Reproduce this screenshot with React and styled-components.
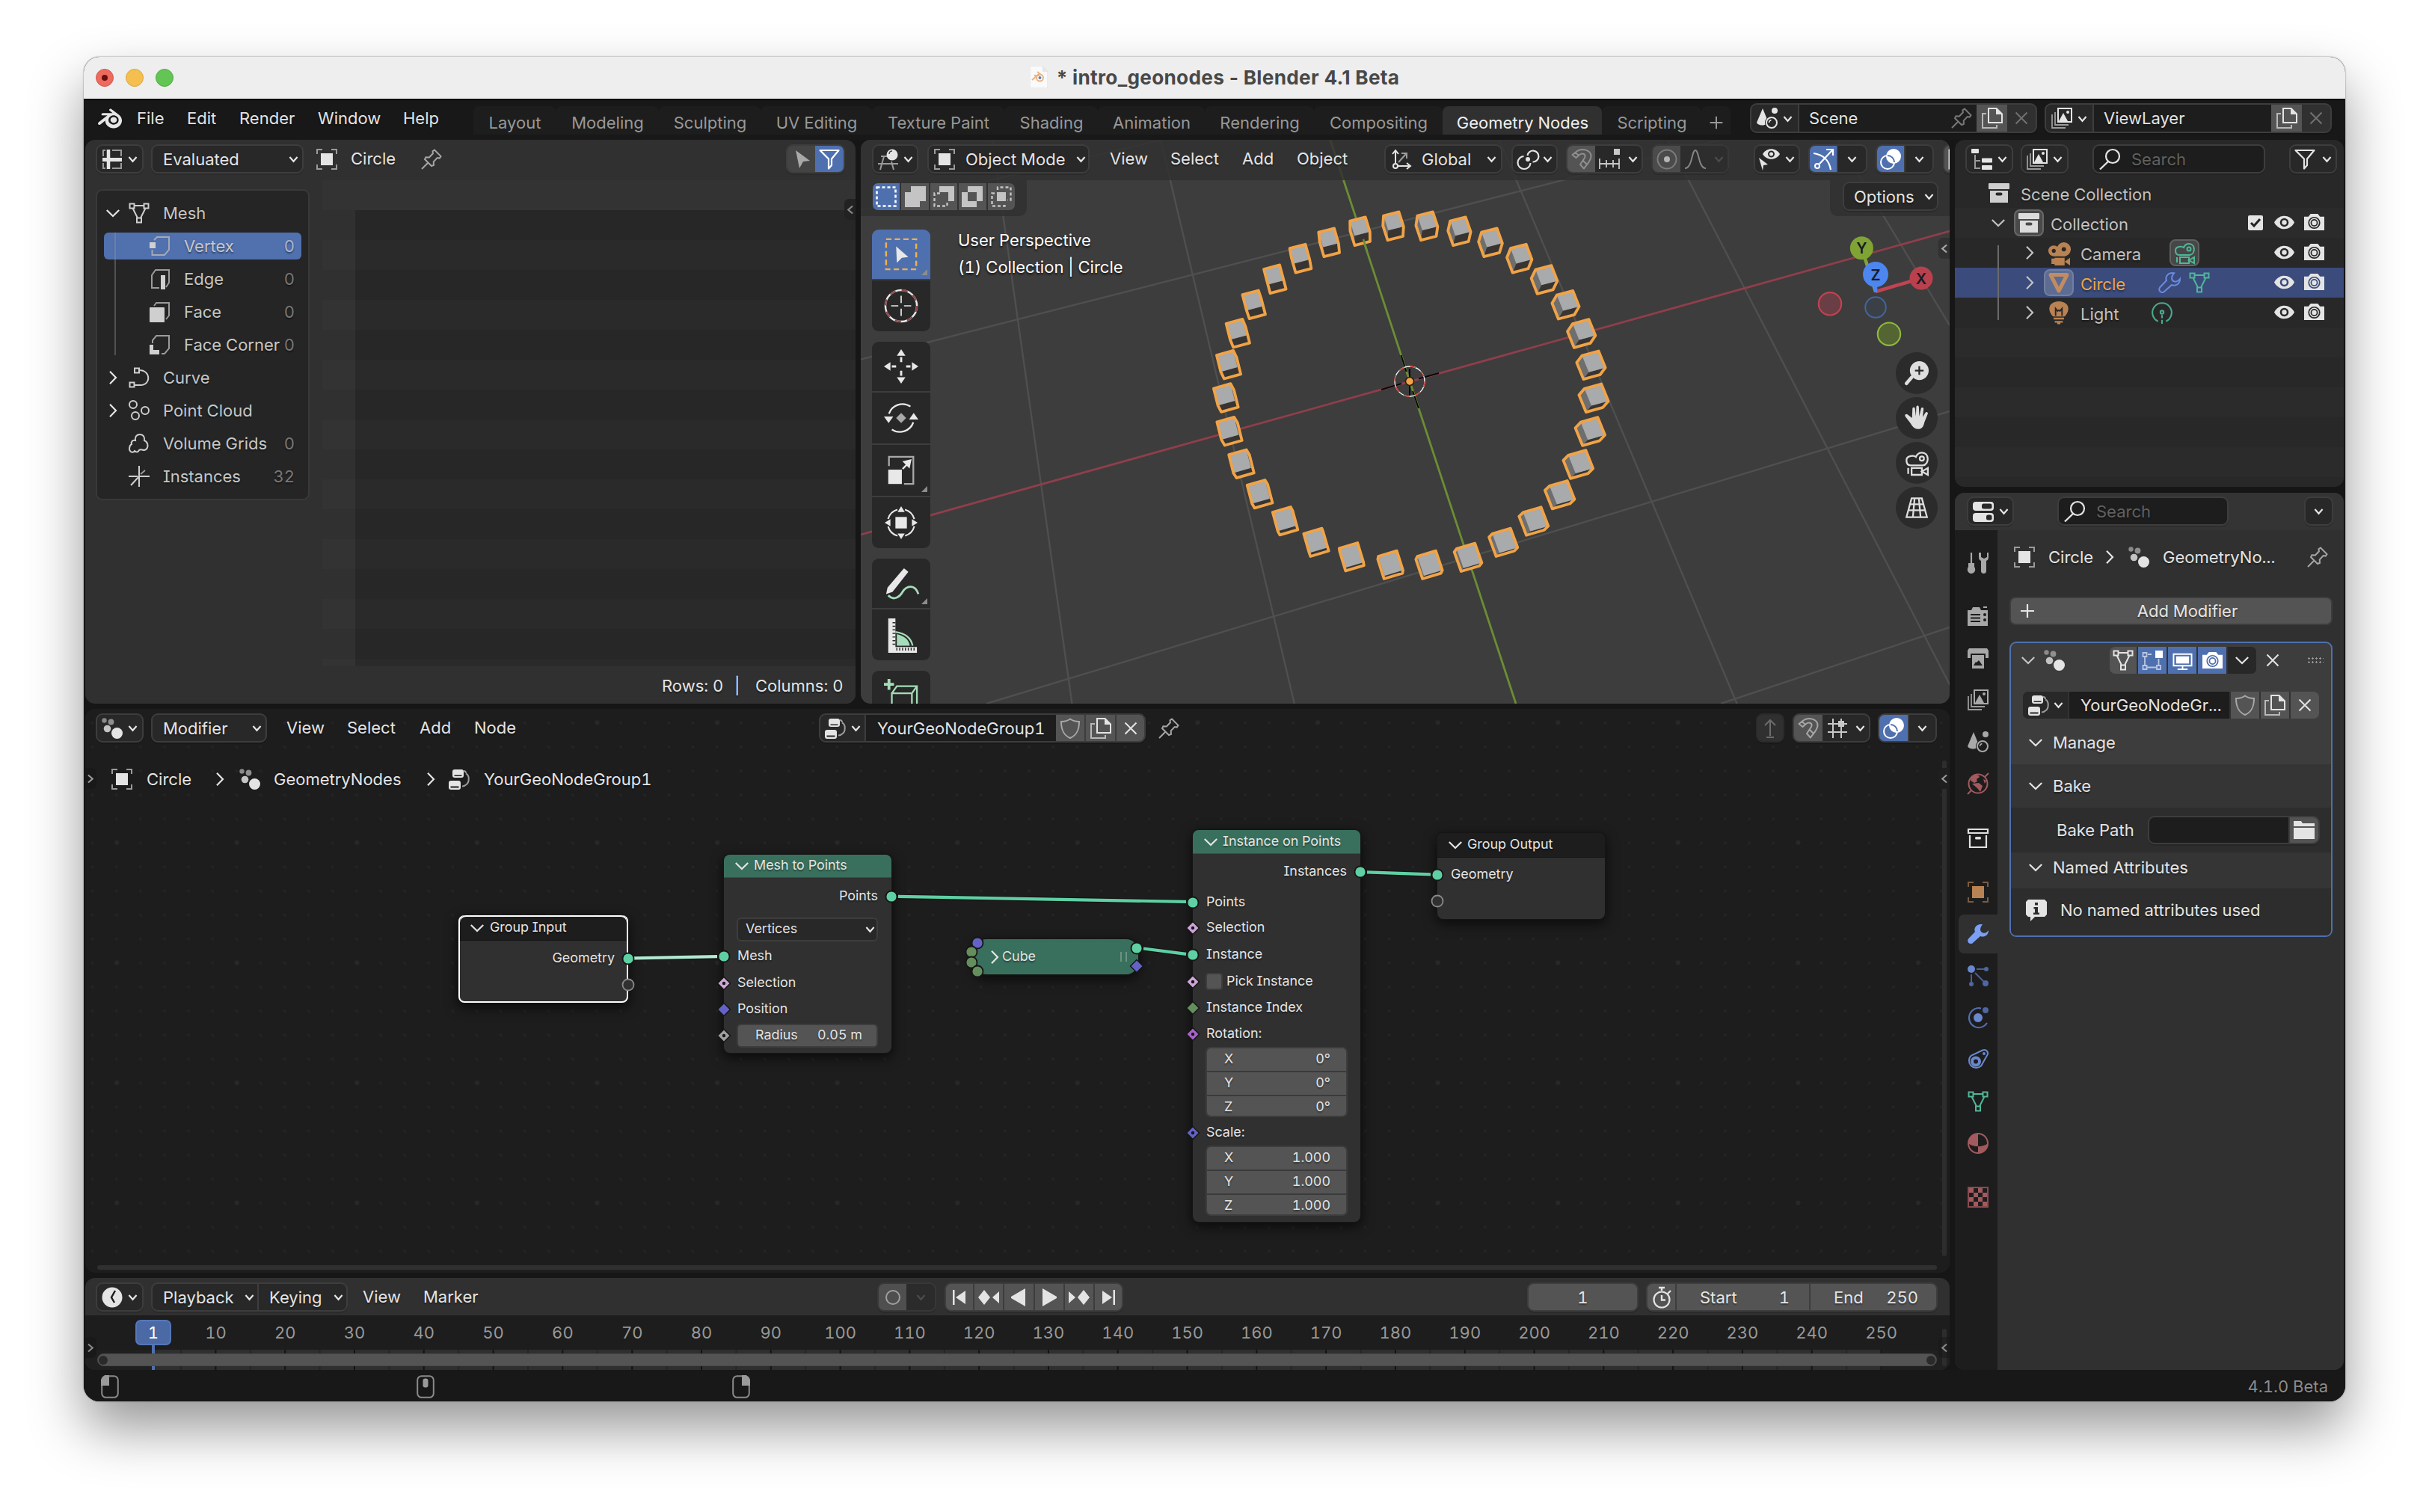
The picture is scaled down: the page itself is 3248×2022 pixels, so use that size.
import React from "react";
import styled, { createGlobalStyle, css } from "styled-components";
import { SiBlender } from "react-icons/si";

const C = {
  text: "#e4e4e4",
  blue: "#4f70af",
  btn: "#545454",
  dark: "#282828",
  field: "#1d1d1d",
  line: "#3d3d3d",
  panel: "#303030",
  teal: "#5fd0a4",
  orange: "#f0a347",
};

const Global = createGlobalStyle`
  html, body { margin: 0; padding: 0; background: #fff; }
  * { box-sizing: border-box; }
  body { font-family: Inter, "Liberation Sans", sans-serif; font-size: 22px; color: ${C.text}; font-feature-settings: "cv08", "tnum", "calt" 0; }
  svg { display: block; }
`;

/* ---------- icons, drawn on a 28 x 28 board ---------- */
const G = "#9b9b9b";
const L = (d, c, w = 2, extra = {}) => (
  <path d={d} fill="none" stroke={c} strokeWidth={w} {...extra} />
);
const ICONS = {
  sheet: (c) => (<>{L("M14 2h12v8M26 19v7H14M5 26H2v-7M2 10V2h3", G)}{L("M9 1v26", c, 4.5)}{L("M1 14.5h26", c, 5)}</>),
  object: (c, bg, g) => (<>{L("M1 7V1h7M20 1h7v6M27 21v6h-7M8 27H1v-6", g || G)}<rect x="6" y="6" width="16" height="16" fill={c} /></>),
  pin: (c) => L("M18 1.5l8.5 8.5-1.8 2.6-3-.5-5 5.2.3 4.5-3 1.2-9-9 1.4-2.8 4.5.3 5-5.2-.4-3zM9.5 18.5L1 27", c),
  arrow: (c) => <path d="M6 2l19 14-9 1-5 9z" fill={c} />,
  filter: (c) => L("M1.5 2h25L17 13.5V22l-4 4.5v-13z", c, 2.2, { strokeLinejoin: "round" }),
  mesh: (c) => (<>{L("M1.5 1.5h6v6h-6zM20.500 1.500h6v6h-6zM11 20.500h6v6h-6zM7.500 4h13M5.500 7.500L12 20.500M22.500 7.500L16 20.500", c)}</>),
  vertex: (c) => (<>{L("M6 6l4-4h16v17l-6 7H3.500v-7", "#a4a9b4")}<rect x="0" y="9" width="8" height="8" fill={c} /></>),
  edge: (c) => (<>{L("M13 26H3V9l5-7h18v17l-4 6", G)}<rect x="15" y="9" width="6" height="19" fill={c} /></>),
  face: (c) => (<>{L("M6 6l3-4h17v17l-4 5", G)}<rect x="0" y="8" width="20" height="20" rx="1" fill={c} /></>),
  corner: (c) => (<>{L("M4 12V8l5-6h17v17l-6 7h-4", G)}<path d="M0 14h5v7h8v6H0z" fill={c} /></>),
  curve: (c) => L("M8 1.500h6v6H8zM1.500 20.500h6v6h-6zM14 4c16 0 16 20 2 20H7.500", c),
  points: (c) => (<g fill="none" stroke={c} strokeWidth="2"><circle cx="6" cy="6" r="5" /><circle cx="22" cy="14" r="5" /><circle cx="9" cy="21" r="5" /></g>),
  volume: (c) => L("M9 10c-1-5 2-8 6-8s7 3 6 8c6 3 6 11 0 13-3 0-5-2-7 0-2 4-5 2-6 1-2 3-6 2-7-2 0-4 1-6 3-7-1-3 1-6 5-5z", c),
  axes: (c) => (<>{L("M14 0v28", c)}{L("M12 14H0M28 14H14L3 26", c)}{L("M16 11l6-5", G)}</>),
  view3d: (c) => (<>{L("M5 10H15M1 20h27M9 10L4 28M19 17l3 11M6 10h0", G)}<circle cx="20" cy="8" r="7.500" fill={c} />{L("M16 7c0-3 2-4 4-4", "#444", 1.5)}</>),
  selNew: (c) => L("M1.500 1.500h25v25h-25z", c, 2.600, { strokeDasharray: "4 3" }),
  selAdd: (c) => <path d="M8 0h20v20h-8v8H0V8h8z" fill={c} />,
  selSub: (c) => (<><path d="M8 0h20v20h-8V8H8z" fill={c} />{L("M9 9.500H1.500v17h17V20", c, 2.400, { strokeDasharray: "4 3" })}</>),
  selInv: (c) => (<path fillRule="evenodd" d="M8 0h20v20h-8v8H0V8h8zM8 8h12v12H8z" fill={c} />),
  selInt: (c) => (<><rect x="8" y="8" width="12" height="12" fill={c} />{L("M9 5V1.500h17.500v17H22M5 9.500H1.500v17h17V22", c, 2.400, { strokeDasharray: "4 3" })}</>),
  orient: (c) => (<>{L("M6 19V3M2 7l4-5 4 5M9 23h16M21 19l5 4-5 4", c)}<circle cx="6" cy="23" r="3" fill="none" stroke={c} strokeWidth="2" />{L("M10 18L20 7M14 6h7v7", G)}</>),
  pivot: (c) => (<><circle cx="15" cy="14" r="3" fill={c} />{L("M14.500 9a7.500 7.500 0 1 1 7 8.500", c, 2.200)}{L("M9.500 10a8.500 8.500 0 1 0 9 9", c, 2.200)}</>),
  magnet: (c) => L("M1.500 8L8 3C14-1 26.500 1 26.500 10c0 6-6 11-9.500 16.500L12 21l6-9c2.500-5-3-7-7-4l-4.500 4zM5.500 5l5 4.200M21 21l-5-5", c, 2, { strokeLinejoin: "round" }),
  snapInc: (c) => (<><rect x="20" y="0" width="8" height="8" fill={c} />{L("M1 13v14M27 13v14M10 15v10M19 15v10M1 20h26", c, 1.800)}</>),
  grid: (c) => (<>{L("M8 1v26M19 1v26M1 8h26M1 19h26", c, 2)}<rect x="15" y="4" width="8" height="8" fill={c} /></>),
  prop: (c) => (<><circle cx="14" cy="14" r="12.500" fill="none" stroke="#7c7c7c" strokeWidth="2" /><circle cx="14" cy="14" r="4" fill={c} /></>),
  falloff: (c) => L("M0 26C10 26 9 2 14 2s4 24 14 24", c),
  vis: (c) => (<><path d="M5 7c5-9 18-9 23 0-5 9-18 9-23 0z" fill={c} /><circle cx="16.500" cy="7" r="3.500" fill={c} stroke="#282828" strokeWidth="2" /><path d="M0 12l12 9-6 1-1 7z" fill={c} /></>),
  gizmo: (c) => (<>{L("M1 6C14 8 22 16 24 28M9 20L26 2M18 1h9v8", c, 2.200)}<circle cx="6" cy="23" r="3" fill="none" stroke={c} strokeWidth="2" /></>),
  overlay: (c) => (<><circle cx="18" cy="10" r="10" fill={c} /><circle cx="10" cy="18" r="9" fill="none" stroke={c} strokeWidth="2" />{L("M10 9a9 9 0 0 1 9 9", C.blue, 2)}</>),
  shadeSolid: (c) => L("M26 2H3v24h23", c, 3),
  scene: (c, bg) => (<><path d="M8 1l7 17c-1 7-13 7-15 2z" fill={c} /><circle cx="24" cy="4" r="4" fill={c} /><circle cx="20" cy="20" r="9" fill={bg} /><circle cx="20" cy="20" r="7" fill="none" stroke={c} strokeWidth="2" />{L("M16.500 20c0-2 1-3 3-3.500", c, 1.500)}</>),
  layers: (c) => (<>{L("M1 9v18h18M5 6v17h18", G, 1.800)}<path fillRule="evenodd" d="M8 0h20v20H8zM10 2v16h16V2z" fill={c} /><path d="M10 18l6-11 6 11z" fill={c} /><circle cx="22" cy="6" r="2" fill={c} /></>),
  dup: (c) => (<>{L("M6 8H1v19h19v-4", "#b8b8b8")}<path fillRule="evenodd" d="M8 0h12l8 8v13H8zM10 2v17h16V9h-7V2z" fill={c} /></>),
  x: (c) => L("M6.500 6.500l15 15M21.500 6.500l-15 15", c, 2),
  plus: (c) => L("M14 5v18M5 14h18", c, 2.200),
  outliner: (c) => (<>{L("M5 8v18h7M5 16h7", G)}<rect x="0" y="0" width="10" height="6" rx="1" fill={c} /><rect x="14" y="12.500" width="14" height="6" rx="1" fill={c} /><rect x="14" y="22" width="14" height="6" rx="1" fill={c} /></>),
  search: (c) => (<><circle cx="18" cy="10" r="9" fill="none" stroke={c} strokeWidth="2.200" />{L("M12 17L1 27.500", c, 2.400)}</>),
  box: (c, bg) => (<><rect x="0" y="1" width="28" height="8" rx="1" fill={c} /><path d="M2 11h24v16H2z" fill={c} /><rect x="9.500" y="13.500" width="9" height="4" rx="2" fill={bg} /></>),
  boxOut: (c) => (<>{L("M1 2h26v5H1zM3 10v16h22V10", c, 2.200)}<rect x="10" y="12" width="8" height="3.500" rx="1.500" fill={c} /></>),
  cine: (c, bg) => (<><circle cx="7" cy="11" r="7" fill={c} /><circle cx="20" cy="9" r="9" fill={c} /><path d="M8 9h14v9H7z" fill={c} /><circle cx="7" cy="11" r="2.500" fill={bg} /><circle cx="20" cy="9" r="2.800" fill={bg} /><path d="M8 20h13v10H8zM21 25l7-5v10zM4 21v7h4v-7z" fill={c} /></>),
  cineOut: (c) => (<>{L("M7 17h14c8-1 8-15-1-15-5 0-6 3-7 5-2-2-11-2-11 4 0 4 2 6 5 6zM8 20h12v8H8zM20 24l7-4v8zM4 20v7", c, 2)}<circle cx="20" cy="9" r="2.500" fill="none" stroke={c} strokeWidth="2" /></>),
  tri: (c) => L("M3 3.500h22L14 25z", c, 5, { strokeLinejoin: "round" }),
  wrench: (c, bg, g) => (<path d="M18 1c-7 0-10 6-8 10L1 20.500c-2 3 0 7 4 6.500 1 0 2-1 2.500-1.500L17 17c5 2 11-1 11-8-3 4-5 4-7.500 3.500C16 11 16 6 20 1.300z" fill={g ? "none" : c} stroke={g || c} strokeWidth={g ? 2 : 0} />),
  bulb: (c, bg) => (<><path d="M14 0c16 1 13 14 7 19H7C1 14-2 1 14 0z" fill={c} />{L("M10 18V9l2.500 3 1.500-1 1.500 1L18 9v9", bg, 1.800)}{L("M7.500 21.500h13M9 25.500h10", c, 2.200)}<rect x="12" y="26" width="4" height="2.500" fill={c} /></>),
  lightData: (c) => (<>{L("M9 25A12 12 0 1 1 19 25", c, 2)}<circle cx="14" cy="13.500" r="2" fill="none" stroke={c} strokeWidth="2" />{L("M14 17v4M14 23v5", c, 2)}</>),
  eye: (c, bg) => (<><path d="M0 14c6-12 22-12 28 0-6 12-22 12-28 0z" fill={c} /><circle cx="14" cy="14" r="6" fill={bg} /><circle cx="14" cy="14" r="3.300" fill={c} /></>),
  camera: (c, bg) => (<><path d="M0 6h6l3-4h10l3 4h6v19H0z" fill={c} /><circle cx="14" cy="14.500" r="7.500" fill="none" stroke={bg} strokeWidth="1.800" /><circle cx="14" cy="14.500" r="4.200" fill="none" stroke={bg} strokeWidth="1.800" /></>),
  props: (c, bg) => (<><rect x="0" y="1" width="28" height="12" rx="4" fill={c} /><rect x="12" y="3.500" width="13.500" height="7" rx="2.500" fill={bg} /><rect x="0" y="16" width="28" height="12" rx="4" fill={c} /><rect x="18" y="18.500" width="7.500" height="7" rx="2.500" fill={bg} /></>),
  geo: (c) => (<><circle cx="3.500" cy="3.500" r="3.200" fill="#8a8a8a" /><circle cx="12.500" cy="5.500" r="3.900" fill="#8f8f8f" /><circle cx="7.500" cy="14.500" r="4.800" fill="#c4c4c4" /><circle cx="20.500" cy="20.500" r="7.500" fill={c} /></>),
  group: (c, bg) => (<>{L("M20 3c3 0 3 2 3 3M23 6.500c5 2 5 12 0 15-1 1-2 2-5 2", G, 2)}<rect x="5" y="1" width="15" height="11" rx="3" fill={c} /><rect x="0" y="16" width="16" height="12" rx="3" fill={c} /><rect x="2.500" y="23.500" width="11" height="2" fill={bg} /><rect x="7.500" y="8.500" width="10" height="1.500" fill={bg} /></>),
  shield: (c) => L("M14 1.500c4 3 8 3.500 12 3.500 0 11-3 18-12 22C5 23 2 16 2 5c4 0 8-.5 12-3.500z", c, 2),
  tool: (c) => (<>{L("M5 0v15", c, 2.200)}<path d="M1 14h8v5c3 4 0 9-4 9s-7-5-4-9z" fill={c} /><path d="M15 0v5c0 4 1 5 3 6v14c0 4 7 4 7 0V11c2-1 3-2 3-6V0h-2v6l-4 2-4-2V0z" fill={c} /></>),
  render: (c, bg) => (<><path d="M0 6h5l2-4h9l2 4h9v21H0z" fill={c} />{L("M4 12h13M4 16.500h13M4 21h13", bg, 2)}<circle cx="23" cy="12" r="2" fill={bg} /><circle cx="23" cy="19" r="2" fill={bg} /><rect x="21" y="1" width="5" height="2" fill={c} /></>),
  output: (c, bg) => (<><path d="M2 1h24l2 3v10h-4V8H4v6H0V4z" fill={c} /><path fillRule="evenodd" d="M6 10h16v18H6zM8 24h12l-5-7-3 3-1-1z" fill={c} /></>),
  world: (c) => (<><circle cx="14" cy="14" r="12.500" fill="none" stroke={c} strokeWidth="2" /><path d="M5 5c6-4 9-3 11 0l-4 3 1 3-4 2-5-3zM6 14l9-1 5 4-3 8-4-5zM21 8l4 2-2 4z" fill={c} />{L("M28 0l-5 5M0 28l5-5", c, 2)}</>),
  particles: (c) => (<>{L("M12 5h13M5 12v13M10 10l14 14", "#4a5f96", 2)}<circle cx="5" cy="5" r="5" fill={c} /><circle cx="25" cy="5" r="3" fill="#4f66a2" /><circle cx="5" cy="25" r="3" fill="#4f66a2" /><circle cx="24" cy="24" r="4" fill="#4f66a2" /></>),
  physics: (c) => (<>{L("M18 1.500A13 13 0 1 0 26 21", "#5670ad", 2)}<circle cx="14" cy="14" r="6" fill={c} /><circle cx="24" cy="4" r="4" fill="#4f66a2" /></>),
  constraint: (c) => (<>{L("M20 1.500c5-2 9 3 6 7l-8 14A9.500 9.500 0 1 1 5 8.500z", c, 2)}<circle cx="11" cy="16.500" r="5" fill="none" stroke={c} strokeWidth="4" /><circle cx="22" cy="6" r="2" fill={c} /></>),
  material: (c) => (<><circle cx="14" cy="14" r="13" fill="none" stroke={c} strokeWidth="2" /><path d="M14 1v17c-6 0-11-2-13-4C1 6 7 1 14 1zM14 18c6 0 11-2 13-4 0 8-6 13-13 13z" fill={c} /></>),
  texture: (c) => (<><rect x="1" y="1" width="26" height="26" fill="none" stroke="#8a4a50" strokeWidth="2" /><path d="M2 2h6v6H2zM14 2h6v6h-6zM8 8h6v6H8zM20 8h6v6h-6zM2 14h6v6H2zM14 14h6v6h-6zM8 20h6v6H8zM20 20h6v6h-6z" fill={c} /></>),
  info: (c, bg) => (<><path d="M3 0h22l3 3v17l-3 3H12l-6 6v-6H3l-3-3V3z" fill={c} /><path d="M12 4h4v3.500h-4zM10.500 10H16v7.500h2V20h-8v-2.500h2V12.500h-1.500z" fill={bg} /></>),
  folder: (c) => <path d="M0 2h10l2 3h16v4H0zM0 11h28v15H0z" fill={c} />,
  editmode: () => (<>{L("M1.500 4h5v5h-5zM1.500 21h5v5h-5zM20 21h5v5h-5zM4 9v12M7 23.500h13M8 6h5M22.500 12v9", "#b9c6e2", 1.800)}<rect x="18" y="1" width="10" height="10" fill="#fff" /></>),
  screen: (c) => (<>{L("M1.500 5h25v16h-25z", c, 2)}<rect x="5" y="8" width="18" height="10" fill={c} />{L("M14 21v4M7 26h14", c, 2)}</>),
  clock: (c) => (<><circle cx="14" cy="14" r="13.500" fill={c} />{L("M18 5l-5 9 4 7", "#1a1a1a", 2.400)}</>),
  watch: (c) => (<><circle cx="14" cy="17" r="10.500" fill="none" stroke={c} strokeWidth="2.200" />{L("M14 5V1M10 1h8M22 9l4-4M14 11v6.500h5", c, 2.400)}</>),
  record: (c) => <circle cx="14" cy="14" r="9" fill="none" stroke={c} strokeWidth="2" />,
  first: (c) => (<><rect x="5" y="4" width="2.500" height="20" fill={c} /><path d="M22 5v18L9 14z" fill={c} /></>),
  prevKey: (c) => (<path d="M8 4l8 10-8 10-8-10zM28 6v16l-9-8z" fill={c} />),
  play: (c) => <path d="M5 2l19 11v2L5 26z" fill={c} />,
  up: (c) => L("M9 26h10M14 24V4M7 10l7-7 7 7", c, 2),
  zoom: () => (<><circle cx="17" cy="11" r="11" fill="#dedede" />{L("M8 19L2 26", "#dedede", 4, { strokeLinecap: "round" })}{L("M17 6v10M12 11h10", "#2b2b2b", 2)}</>),
  hand: () => <path d="M9 3c0-2 3-2 3 0l1 9 .5-11c0-2 3-2 3 0l.5 11 2-9c.5-2 3-1.500 3 0l-1 10 3-5c1-2 3.500-1 3 1l-4 10c-1 5-3 8-7.500 8-5 0-7-4-9-7l-6-8c-1-2 1-3.500 3-2l5 4z" fill="#dedede" />,
  persp: () => (<>{L("M8 3h12l6 22H2zM11.500 3L9.500 25M16.500 3l2 22M5.500 10h17M4 17h20", "#dedede", 2)}</>),
};

const Icon = ({ n, s = 28, c = C.text, bg = C.dark, g, flip }) => (
  <svg width={s} height={s} viewBox="0 0 28 28" overflow="visible" style={flip ? { transform: "scaleX(-1)" } : undefined}>
    {ICONS[n](c, bg, g)}
  </svg>
);
const ROT = { down: 0, right: -90, left: 90 };
const Chev = ({ d = "down", big, c }) => (
  <svg width={big ? 18 : 13} height={big ? 18 : 13} viewBox="-9 -9 18 18" overflow="visible">
    <path
      d={big ? "M-8.200-4L0 4 8.200-4" : "M-7-3.500L0 4.500 7-3.500"}
      transform={`rotate(${ROT[d]})`}
      fill="none"
      stroke={c || C.text}
      strokeWidth={big ? 2.200 : 3}
    />
  </svg>
);

/* ---------- shared primitives ---------- */
const Slot = styled.div`
  flex: none;
  display: flex;
  align-items: center;
  justify-content: ${(p) => p.$j || "flex-start"};
  width: ${(p) => (p.$w ? p.$w + "px" : "auto")};
  height: ${(p) => (p.$h ? p.$h + "px" : "auto")};
  margin-left: ${(p) => p.$ml || 0}px;
`;
const Label = styled.span`
  flex: none;
  white-space: nowrap;
  line-height: 28px;
  width: ${(p) => (p.$w ? p.$w + "px" : "auto")};
  margin-left: ${(p) => p.$ml || 0}px;
  text-align: ${(p) => p.$a || "left"};
  color: ${(p) => p.$c || C.text};
  text-shadow: 0 2px 2px rgba(0, 0, 0, 0.4);
`;
const Push = styled.div`
  flex: 1;
`;
const Widget = styled.div`
  flex: none;
  display: flex;
  align-items: stretch;
  width: ${(p) => p.$w}px;
  height: ${(p) => p.$h || 39}px;
  margin-left: ${(p) => p.$ml || 0}px;
  border: 2px solid ${(p) => p.$line || C.line};
  border-radius: 9px;
  background: ${(p) => p.$bg || C.dark};
  box-shadow: 0 2px 0 rgba(0, 0, 0, 0.12);
  overflow: hidden;
`;
const Seg = styled.div`
  flex: ${(p) => (p.$w ? "none" : 1)};
  display: flex;
  align-items: center;
  justify-content: ${(p) => p.$j || "center"};
  gap: ${(p) => p.$gap || 0}px;
  width: ${(p) => (p.$w ? p.$w + "px" : "auto")};
  padding: 0 ${(p) => p.$pr || 0}px 0 ${(p) => p.$pl || 0}px;
  background: ${(p) => p.$bg || "transparent"};
  ${(p) => p.$sep && css`border-left: 2px solid ${C.line};`}
`;
const MenuButton = ({ icon, w = 64, ml }) => (
  <Widget $w={w} $ml={ml}>
    <Seg $gap={7}>
      <Icon n={icon} />
      <Chev />
    </Seg>
  </Widget>
);
const Area = styled.section`
  flex: none;
  position: relative;
  display: flex;
  flex-direction: column;
  width: ${(p) => p.$w}px;
  height: ${(p) => p.$h}px;
  background: ${(p) => p.$bg};
  border-radius: 13px;
  overflow: hidden;
`;
const Header = styled.header`
  flex: none;
  position: relative;
  z-index: 2;
  display: flex;
  align-items: flex-start;
  height: ${(p) => p.$h || 54}px;
  padding: ${(p) => p.$pt || 6}px 0 0 ${(p) => p.$pl || 14}px;
  background: ${(p) => p.$bg || "transparent"};
  & > span { line-height: 39px; }
`;
const EdgeTab = styled.div`
  position: absolute;
  z-index: 3;
  top: ${(p) => p.$y}px;
  ${(p) => (p.$side === "left" ? "left: 0;" : "right: 0;")}
  width: 15px;
  height: 28px;
  display: flex;
  align-items: center;
  justify-content: ${(p) => (p.$side === "left" ? "flex-start" : "flex-end")};
  background: ${(p) => p.$bg};
  border-radius: ${(p) => (p.$side === "left" ? "0 6px 6px 0" : "6px 0 0 6px")};
`;

/* ---------- window ---------- */
const Page = styled.div`
  width: 3248px;
  height: 2022px;
  padding: 76px 112px;
  background: #fff;
  overflow: hidden;
`;
const Window = styled.div`
  display: flex;
  flex-direction: column;
  width: 3024px;
  height: 1798px;
  border-radius: 21px;
  background: #161616;
  overflow: hidden;
  box-shadow: 0 0 2px rgba(0, 0, 0, 0.55), 0 36px 72px rgba(0, 0, 0, 0.41);
`;
const TitleBar = styled.div`
  flex: none;
  display: grid;
  grid-template-columns: 1fr auto 1fr;
  align-items: center;
  height: 56px;
  padding: 0 16px;
  background: #eeeeee;
`;
const Lights = styled.div`
  display: flex;
  gap: 16px;
`;
const Light = styled.div`
  width: 24px;
  height: 24px;
  border-radius: 50%;
  background: ${(p) => p.$c};
  border: 1px solid ${(p) => p.$b};
  display: grid;
  place-items: center;
  &::after {
    content: "";
    width: 8px;
    height: 8px;
    border-radius: 50%;
    background: ${(p) => p.$dot || "transparent"};
  }
`;
const WinTitle = styled.div`
  display: flex;
  align-items: center;
  gap: 12px;
  padding-bottom: 2px;
  color: #484848;
  font-size: 26.200px;
  font-weight: 700;
  letter-spacing: 0.300px;
  font-feature-settings: normal;
  white-space: nowrap;
`;
const TopBarBox = styled.div`
  flex: none;
  display: flex;
  align-items: flex-start;
  height: 55px;
  border-top: 2px solid #000;
  padding-left: 19px;
  background: #181818;
`;
const Tabs = styled.nav`
  display: flex;
  margin: 8px 0 0 22px;
  height: 38px;
`;
const Tab = styled.div`
  flex: none;
  width: ${(p) => p.$w}px;
  display: flex;
  align-items: center;
  justify-content: center;
  padding: 6px 0 0 1px;
  white-space: nowrap;
  border-radius: 8px 8px 0 0;
  background: ${(p) => (p.$on ? "#303030" : "#1d1d1d")};
  color: ${(p) => (p.$on ? "#efefef" : "#989898")};
`;
const TABS = [["Layout", 110], ["Modeling", 138], ["Sculpting", 136], ["UV Editing", 149], ["Texture Paint", 177], ["Shading", 125], ["Animation", 143], ["Rendering", 146], ["Compositing", 172], ["Geometry Nodes", 213], ["Scripting", 133]];
const IdSlot = styled(Slot)`
  margin-top: 4px;
`;
const IdSelector = ({ icon, name, pin, ml }) => (
  <Widget $w={384} $ml={ml} $h={40} $bg="#303030">
    <Seg $w={62} $gap={7} $bg={C.dark}><Icon n={icon} /><Chev /></Seg>
    <Seg $w={239} $sep $j="space-between" $pl={13} $pr={6} $bg={C.field}>
      <Label>{name}</Label>
      {pin && <Icon n="pin" c="#777" />}
    </Seg>
    <Seg $w={41} $bg={C.btn}><Icon n="dup" /></Seg>
    <Seg><Icon n="x" c="#717171" /></Seg>
  </Widget>
);

const TopBar = () => (
  <TopBarBox>
    <Slot $w={32} $h={48}><SiBlender size={33} color="#e6e6e6" /></Slot>
    <Slot $h={47}>
      <Label $ml={20} $w={67}>File</Label>
      <Label $w={70}>Edit</Label>
      <Label $w={105}>Render</Label>
      <Label $w={114}>Window</Label>
      <Label $w={72}>Help</Label>
    </Slot>
    <Tabs>
      {TABS.map(([t, w]) => <Tab key={t} $w={w} $on={t === "Geometry Nodes"}>{t}</Tab>)}
      <Tab $w={39}><Icon n="plus" c="#989898" s={26} /></Tab>
    </Tabs>
    <IdSlot $h={40} $ml={26}>
      <IdSelector icon="scene" name="Scene" pin />
      <IdSelector icon="layers" name="ViewLayer" ml={10} />
    </IdSlot>
  </TopBarBox>
);

/* ---------- spreadsheet ---------- */
const Row = styled.div`
  flex: 1;
  min-height: 0;
  display: flex;
`;
const TreeBox = styled.div`
  position: relative;
  width: 286px;
  height: 416px;
  margin: 12px 17px 0 14px;
  padding: 12px 9px 0;
  border: 2px solid #393939;
  border-radius: 9px;
  background: #252525;
`;
const TreeRow = styled.div`
  display: flex;
  align-items: center;
  height: 36px;
  margin-bottom: 8px;
  padding: 0 9px 0 ${(p) => p.$pl}px;
  border-radius: 6px;
  background: ${(p) => (p.$on ? "#5070ae" : "transparent")};
`;
const TreeGuide = styled.div`
  position: absolute;
  left: 23px;
  top: 56px;
  width: 2px;
  height: 164px;
  background: rgba(150, 150, 150, 0.4);
`;
const TREE = [
  ["mesh", "Mesh", "", "down"],
  ["vertex", "Vertex", "0", null, true],
  ["edge", "Edge", "0", null, true],
  ["face", "Face", "0", null, true],
  ["corner", "Face Corner", "0", null, true],
  ["curve", "Curve", "", "right"],
  ["points", "Point Cloud", "", "right"],
  ["volume", "Volume Grids", "0"],
  ["axes", "Instances", "32"],
];
const SheetGrid = styled.div`
  flex: 1;
  display: flex;
  flex-direction: column;
  background: #333;
`;
const SheetRows = styled.div`
  flex: none;
  height: 610px;
  margin-top: 40px;
  display: grid;
  grid-template-columns: 44px 1fr;
`;
const Stripe = styled.div`
  background: repeating-linear-gradient(${(p) => p.$a} 0 40px, ${(p) => p.$b} 40px 80px);
`;
const Footer = styled.div`
  height: 50px;
  display: flex;
  align-items: center;
  padding-top: 1px;
  background: #303030;
`;
const Spreadsheet = () => (
  <Area $w={1030} $h={754} $bg="#303030">
    <Header>
      <MenuButton icon="sheet" />
      <Widget $w={204} $ml={10}><Seg $j="space-between" $pl={14} $pr={5}><Label>Evaluated</Label><Chev /></Seg></Widget>
      <Slot $ml={17} $h={39}><Icon n="object" /></Slot>
      <Label $ml={18} $w={94}>Circle</Label>
      <Slot $h={39}><Icon n="pin" c="#a5a5a5" /></Slot>
      <Widget $w={79} $ml={460}><Seg $w={37} $bg="#444"><Icon n="arrow" c="#a9a9a9" /></Seg><Seg $bg={C.blue}><Icon n="filter" c="#fff" /></Seg></Widget>
    </Header>
    <Row>
      <TreeBox>
        {TREE.map(([icon, name, count, open, child]) => (
          <TreeRow key={name} $pl={child ? 61 : 3} $on={name === "Vertex"}>
            {!child && <Slot $w={30}>{open && <Chev big d={open} />}</Slot>}
            <Icon n={icon} c="#cfcfcf" />
            <Label $ml={18} $c="#c6c6c6">{name}</Label>
            <Push />
            <Label $c={name === "Vertex" ? "#aab6cf" : "#777"}>{count}</Label>
          </TreeRow>
        ))}
        <TreeGuide />
      </TreeBox>
      <SheetGrid>
        <SheetRows><Stripe $a="#303030" $b="#333" /><Stripe $a="#272727" $b="#2a2a2a" /></SheetRows>
        <Footer>
          <Label $ml={454} $w={97}>Rows: 0</Label>
          <Label $w={28}>|</Label>
          <Label>Columns: 0</Label>
        </Footer>
      </SheetGrid>
    </Row>
    <EdgeTab $y={79} $bg="#222"><Chev d="left" c="#8a8a8a" /></EdgeTab>
  </Area>
);

/* ---------- 3D viewport ---------- */
const CUBES = [
  [1907.9, 302.3], [1863, 302.3], [1818.6, 309.3], [1777.2, 324.3], [1739, 345.7], [1704.8, 373.3], [1676.7, 407.3], [1655.3, 445.7],
  [1643, 487.7], [1639.3, 532], [1644, 576.7], [1660, 620.3], [1684.6, 660.7], [1718.6, 696.7], [1760, 725.3], [1807.3, 744.7],
  [1859.2, 755.3], [1911, 755.3], [1963, 745.3], [2010.2, 725.3], [2050.8, 697], [2085.7, 661.7], [2110.3, 621], [2126.3, 577],
  [2131, 532.3], [2127.5, 488.3], [2114.7, 446], [2093.5, 407.7], [2065, 374], [2031.7, 345.7], [1993, 324.3], [1951.4, 309.3],
];
const cross = (o, a, b) => (a[0] - o[0]) * (b[1] - o[1]) - (a[1] - o[1]) * (b[0] - o[0]);
const half = (list) => {
  const out = [];
  list.forEach((p) => {
    while (out.length > 1 && cross(out[out.length - 2], out[out.length - 1], p) <= 0) out.pop();
    out.push(p);
  });
  return out.slice(0, -1);
};
const hull = (pts) => {
  const s = [...pts].sort((a, b) => a[0] - b[0] || a[1] - b[1]);
  return [...half(s), ...half([...s].reverse())];
};
const str = (pts) => pts.map((p) => p.map((v) => v.toFixed(1)).join(",")).join(" ");
const Cube = ({ at: [x, y] }) => {
  const ex = 20.5 + (y - 302) * 0.009;
  const ey = 19.5 + (y - 302) * 0.0145;
  const rise = -(0.255 + (y - 302) * 0.0001) * ex;
  const lean = (0.329 + (x - 1885) * 0.00033) * ey;
  const dx = 4.5 - (x - 1643) * 0.024;
  const dy = 4 + (755 - y) * 0.02;
  const ox = x - (ex + lean + dx) / 2;
  const oy = y - (rise + ey + dy) / 2;
  const a = [ox, oy];
  const b = [ox + ex, oy + rise];
  const c = [b[0] + lean, b[1] + ey];
  const d = [a[0] + lean, a[1] + ey];
  const low = ([px, py]) => [px + dx, py + dy];
  const all = hull([a, b, c, d, low(a), low(b), low(c), low(d)]);
  return (
    <g>
      <polygon points={str(all)} fill="#6b6b6b" />
      <polygon points={str([b, c, low(c), low(b)])} fill="#4a4846" />
      <polygon points={str([a, d, low(d), low(a)])} fill="#6e6e6e" />
      <polygon points={str([d, c, low(c), low(d)])} fill="#383431" />
      <polygon points={str([a, b, c, d])} fill="#a8aaac" />
      <polygon points={str(all)} fill="none" stroke={C.orange} strokeWidth="3.800" strokeLinejoin="round" />
    </g>
  );
};
const SceneSvg = styled.svg`
  position: absolute;
  inset: 0;
`;
const GRID = [
  [1151, 480.7, 2301, 187], [1151, 281.7, 1553, 187], [2607, 550, 1319, 941], [2607, 839, 2301, 941],
  [1327, 187, 1433.5, 941], [1552, 187, 1730.8, 941], [2004.8, 187, 2322.6, 941], [2230, 187, 2607.7, 916.7], [2457, 187, 2607, 435],
];
const Scene3D = () => (
  <SceneSvg width="1456" height="754" viewBox="1151 187 1456 754">
    <g stroke="#4f4f4f" strokeWidth="2.400">
      {GRID.map(([a, b, c, d], i) => <line key={i} x1={a} y1={b} x2={c} y2={d} />)}
    </g>
    <line x1="1151" y1="715" x2="2607" y2="309" stroke="#8f3e4b" strokeWidth="2.800" />
    <line x1="1778.800" y1="187" x2="2027" y2="941" stroke="#6b8d35" strokeWidth="2.800" />
    {CUBES.map((p, i) => <Cube key={i} at={p} />)}
    <line x1="1823" y1="320" x2="1828" y2="336" stroke="#6b8d35" strokeWidth="2.600" />
    <path d="M1847 521l27-8M1897 506.500l27-7.500M1873.500 475l7 22M1889 523l8 23M1885 493v12M1885 516v14" stroke="#080808" strokeWidth="2" />
    <circle cx="1885" cy="510" r="20" fill="none" stroke="#fff" strokeWidth="1.300" />
    <circle cx="1885" cy="510" r="20" fill="none" stroke="#d93a2f" strokeWidth="1.300" strokeDasharray="7.850 7.850" />
    <circle cx="1885" cy="510" r="5.500" fill={C.orange} stroke="#2a1a0a" strokeWidth="1.500" />

    <g strokeWidth="4.500">
      <path d="M2508 390L2569 372" stroke="#c04452" />
      <path d="M2508 390L2489.400 331.700" stroke="#7fa434" />
      <path d="M2508 391V367" stroke="#4d86ee" />
    </g>
    <circle cx="2489.400" cy="331.700" r="15.500" fill="#7fa434" />
    <circle cx="2569" cy="372" r="15.500" fill="#b9414e" />
    <circle cx="2508" cy="367" r="17" fill="#4d86ee" />
    <circle cx="2447" cy="406.300" r="15.200" fill="#693e44" stroke="#c24251" strokeWidth="2.200" />
    <circle cx="2508" cy="411" r="13.800" fill="#3b4047" stroke="#42659c" strokeWidth="2" />
    <circle cx="2526" cy="446.700" r="15.200" fill="#556433" stroke="#8db93f" strokeWidth="2.200" />
    <g fontFamily="Inter, sans-serif" fontSize="20" fontWeight="600" textAnchor="middle" fill="#171c24">
      <text x="2489.400" y="339">Y</text><text x="2508" y="374.500">Z</text><text x="2569" y="379.500">X</text>
    </g>
  </SceneSvg>
);
const SubHeader = styled.div`
  position: relative;
  z-index: 2;
  flex: none;
  display: flex;
  justify-content: space-between;
  height: 48px;
`;
const SubPlate = styled.div`
  display: flex;
  align-items: flex-start;
  width: ${(p) => p.$w}px;
  height: 48px;
  padding: ${(p) => p.$pt}px 0 0 ${(p) => p.$pl}px;
  background: rgba(48, 48, 48, 0.82);
  border-radius: ${(p) => (p.$side === "left" ? "0 0 10px 0" : "0 0 0 10px")};
`;
const SelectModes = styled.div`
  display: flex;
  gap: 2px;
  height: 36px;
  border-radius: 7px;
  overflow: hidden;
`;
const SelectMode = styled.div`
  width: 36.400px;
  display: grid;
  place-items: center;
  background: ${(p) => (p.$on ? C.blue : C.btn)};
`;
const ViewBody = styled.div`
  position: relative;
  z-index: 1;
  display: flex;
  align-items: flex-start;
`;
const ToolColumn = styled.div`
  display: flex;
  flex-direction: column;
  gap: 14px;
  width: 78px;
  margin: 18px 0 0 15px;
`;
const ToolGroup = styled.div`
  display: flex;
  flex-direction: column;
  gap: 2px;
  border-radius: 9px;
  overflow: hidden;
  background: #3d3d3d;
`;
const ToolBtn = styled.div`
  position: relative;
  height: ${(p) => p.$h || 67}px;
  display: grid;
  place-items: center;
  background: ${(p) => (p.$on ? C.blue : "#282828")};
  &::after {
    content: "";
    display: ${(p) => (p.$more ? "block" : "none")};
    position: absolute;
    right: 4px;
    bottom: 5px;
    border: 4px solid transparent;
    border-right-color: #8d8d8d;
    border-bottom-color: #8d8d8d;
  }
`;
const w = "#e8e8e8";
const mint = "#a5dcb9";
const TOOLS = {
  select: <><rect x="3" y="3" width="42" height="42" fill="none" stroke="#f3b04c" strokeWidth="2.600" strokeDasharray="7.500 4.500" /><path d="M17 13l17 15-9 1-7 7z" fill={w} /></>,
  cursor: <><circle cx="24" cy="24" r="22" fill="none" stroke={w} strokeWidth="2.600" /><circle cx="24" cy="24" r="22" fill="none" stroke="#8d4a4d" strokeWidth="2.600" strokeDasharray="8.640 8.640" /><path d="M24 10v10M24 28v10M10 24h10M28 24h10" stroke={w} strokeWidth="1.800" /></>,
  move: <><path d="M24 0l6 9H18zM24 48l6-9H18zM0 24l9-6v12zM48 24l-9-6v12z" fill={w} /><path d="M24 11v7M24 30v7M11 24h6M31 24h6" stroke={w} strokeWidth="3" /></>,
  rotate: <><path d="M24 17l7 7-7 7-7-7z" fill="#a9a9a9" /><path d="M7 18A20 20 0 0 1 37 8M41 30A20 20 0 0 1 11 40" fill="none" stroke={w} strokeWidth="2.400" /><path d="M0 22h13l-6.500 9zM35 26h13l-6.500-9z" fill={w} /></>,
  scale: <><path d="M7 18V5h34v38H28" fill="none" stroke="#a9a9a9" strokeWidth="2.400" /><rect x="6" y="23" width="19" height="20" fill={w} /><path d="M26 22l8-8M28 12l9-2-2 9z" fill={w} stroke={w} strokeWidth="2.400" /></>,
  transform: <><rect x="16" y="16" width="16" height="16" fill={w} /><circle cx="24" cy="24" r="19" fill="none" stroke={w} strokeWidth="2.200" strokeDasharray="19 10.800" strokeDashoffset="-5" /><path d="M24 1l5 8H19zM24 47l5-8H19zM1 24l8-5v10zM47 24l-8-5v10z" fill={w} /></>,
  annotate: <><path d="M28 3l6 5L12 36l-9 3 2-9z" fill={w} /><path d="M6 41c8 8 16 2 20-5 5-8 17-12 22 3" fill="none" stroke={mint} strokeWidth="3" /></>,
  measure: <><path d="M6 1h10v40h30v8H6z" fill={w} /><path d="M16 20c15 2 22 10 24 19" fill="none" stroke={mint} strokeWidth="2.400" /><path d="M18 23c10 2 17 8 18 16H18z" fill={mint} /><path d="M12 7h4M12 12h4M12 17h4M12 22h4M12 27h4M12 32h4M12 37h4M18 42v4M22 42v4M26 42v4M30 42v4M34 42v4M38 42v4M42 42v4" stroke="#282828" strokeWidth="1.500" /></>,
  addCube: <><path d="M7 0v15M0 7.500h14" stroke={mint} strokeWidth="4" /><path d="M11 50V20h28v30M11 20l7-10h28v40M39 20l7-10" fill="none" stroke={mint} strokeWidth="2.400" /></>,
};
const Tool = ({ n, ...p }) => (
  <ToolBtn {...p}><svg width="46" height="46" viewBox="0 0 48 48" overflow="visible">{TOOLS[n]}</svg></ToolBtn>
);
const ViewText = styled.div`
  margin: 14px 0 0 37px;
  line-height: 36px;
  color: #fff;
  white-space: nowrap;
  text-shadow: 0 2px 3px rgba(0, 0, 0, 0.8);
`;
const NavColumn = styled.div`
  display: flex;
  flex-direction: column;
  gap: 4px;
  margin: 182px 16px 0 auto;
`;
const NavBtn = styled.div`
  width: 56px;
  height: 56px;
  border-radius: 50%;
  display: grid;
  place-items: center;
  background: #2b2b2b;
`;
const Toggle = ({ icon, ml, wd, iw = 36 }) => (
  <Widget $w={wd} $ml={ml}>
    <Seg $w={iw} $bg={C.blue}><Icon n={icon} c="#fff" /></Seg>
    <Seg $sep><Chev /></Seg>
  </Widget>
);
const Viewport = () => (
  <Area $w={1456} $h={754} $bg="#3d3d3d">
    <Scene3D />
    <Header $bg="rgba(48,48,48,0.820)" $pl={15}>
      <MenuButton icon="view3d" w={62} />
      <Widget $w={217} $ml={12}>
        <Seg $j="flex-start" $pl={7}><Icon n="object" /><Label $ml={14} $w={148}>Object Mode</Label><Chev /></Seg>
      </Widget>
      <Label $ml={27} $w={81}>View</Label>
      <Label $w={96}>Select</Label>
      <Label $w={73}>Add</Label>
      <Label $w={117}>Object</Label>
      <Widget $w={158}><Seg $j="flex-start" $pl={7}><Icon n="orient" /><Label $ml={13} $w={87}>Global</Label><Chev /></Seg></Widget>
      <MenuButton icon="pivot" w={62} ml={12} />
      <Widget $w={103} $ml={11}><Seg $w={37} $bg={C.btn}><Icon n="magnet" c="#8f8f8f" /></Seg><Seg $gap={11}><Icon n="snapInc" c="#c8c8c8" /><Chev /></Seg></Widget>
      <Widget $w={104} $ml={11} $line="#383838" $bg="#2d2d2d"><Seg $w={37} $bg="#4b4b4b"><Icon n="prop" c="#b5b5b5" /></Seg><Seg $gap={11}><Icon n="falloff" c="#858585" /><Chev c="#4c4c4c" /></Seg></Widget>
      <MenuButton icon="vis" w={62} ml={33} />
      <Toggle icon="gizmo" wd={79} ml={11} />
      <Toggle icon="overlay" wd={78} ml={11} />
      <Widget $w={40} $ml={12} $bg="#545454"><Seg><Icon n="shadeSolid" /></Seg></Widget>
    </Header>
    <SubHeader>
      <SubPlate $w={222} $pl={16} $pt={4} $side="left">
        <SelectModes>
          {["selNew", "selAdd", "selSub", "selInv", "selInt"].map((n, i) => (
            <SelectMode key={n} $on={i === 0}><Icon n={n} c={i ? "#c4c4c4" : "#fff"} /></SelectMode>
          ))}
        </SelectModes>
      </SubPlate>
      <SubPlate $w={160} $pl={17} $pt={2} $side="right">
        <Widget $w={128}><Seg $j="space-between" $pl={13} $pr={4}><Label>Options</Label><Chev /></Seg></Widget>
      </SubPlate>
    </SubHeader>
    <ViewBody>
      <ToolColumn>
        <ToolGroup><Tool n="select" $on $more $h={66} /><Tool n="cursor" $h={68} /></ToolGroup>
        <ToolGroup><Tool n="move" $h={66} /><Tool n="rotate" $h={68} /><Tool n="scale" $more $h={68} /><Tool n="transform" $h={68} /></ToolGroup>
        <ToolGroup><Tool n="annotate" $more $h={66} /><Tool n="measure" $h={68} /></ToolGroup>
        <ToolGroup><Tool n="addCube" $h={68} /></ToolGroup>
      </ToolColumn>
      <ViewText>User Perspective<br />(1) Collection | Circle</ViewText>
      <NavColumn>
        <NavBtn><Icon n="zoom" s={32} /></NavBtn>
        <NavBtn><Icon n="hand" s={32} /></NavBtn>
        <NavBtn><Icon n="cineOut" s={32} c="#dedede" /></NavBtn>
        <NavBtn><Icon n="persp" s={32} /></NavBtn>
      </NavColumn>
    </ViewBody>
    <EdgeTab $y={131} $bg="#313131"><Chev d="left" c="#aaa" /></EdgeTab>
  </Area>
);

/* ---------- node editor ---------- */
const Canvas = styled.div`
  position: absolute;
  inset: 0;
  background-image: radial-gradient(circle, #282828 2.800px, transparent 3.300px), radial-gradient(circle, #242424 1.600px, transparent 2.300px);
  background-size: 160.600px 160.600px, 32.120px 32.120px;
  background-position: 122.500px 98.500px, 25.700px 34.800px;
  font-size: 17.900px;
`;
const LinkSvg = styled.svg`
  position: absolute;
  inset: 0;
  z-index: 2;
`;
const NodeBox = styled.div`
  position: absolute;
  left: ${(p) => p.$x - 114}px;
  top: ${(p) => p.$y - 948}px;
  width: ${(p) => p.$w}px;
  height: ${(p) => p.$h}px;
  border-radius: ${(p) => p.$r || 8}px;
  background: ${(p) => p.$bg || "#303030"};
  box-shadow: ${(p) => (p.$sel ? "inset 0 0 0 2px #fff," : "0 0 0 1.500px #151515,")} 0 5px 16px 2px rgba(0, 0, 0, 0.6);
  ${Label} { margin-bottom: 2px; }
`;
const NodeHead = styled.div`
  display: flex;
  align-items: center;
  gap: 7px;
  height: ${(p) => p.$h}px;
  padding-left: 15px;
  margin: ${(p) => (p.$sel ? "0 2px" : "0")};
  background: ${(p) => p.$bg};
  border-radius: 8px 8px 0 0;
  border-bottom: 1.500px solid rgba(0, 0, 0, 0.25);
  ${(p) => p.$sel && css`box-shadow: inset 0 2px 0 #fff; padding-left: 14px;`}
`;
const NodeRow = styled.div`
  position: relative;
  display: flex;
  align-items: center;
  justify-content: ${(p) => (p.$out ? "flex-end" : "flex-start")};
  height: ${(p) => p.$h}px;
  padding: ${(p) => p.$pt || 0}px 18px 0 18px;
`;
const SocketSvg = styled.svg`
  position: absolute;
  z-index: 3;
  width: 20px;
  height: 20px;
  ${(p) => (p.$out ? "right: -10px;" : "left: -10.500px;")}
  top: calc(50% - 10px + ${(p) => p.$dy || 0}px);
`;
const Socket = ({ c, t = "o", out, dy }) => (
  <SocketSvg viewBox="-10 -10 20 20" $out={out} $dy={dy}>
    {t === "o" && <circle r="7.500" fill={c} stroke="#161616" strokeWidth="1.800" />}
    {t === "e" && <circle r="7.500" fill="#303030" stroke="#8a8a8a" strokeWidth="1.800" />}
    {(t === "d" || t === "dd") && <path d="M0-8.500L8.500 0 0 8.500-8.500 0z" fill={c} stroke="#161616" strokeWidth="1.500" />}
    {t === "dd" && <circle r="2.200" fill="#161616" />}
  </SocketSvg>
);
const NodeField = styled.div`
  display: flex;
  align-items: center;
  justify-content: space-between;
  width: 191px;
  height: 32px;
  margin-left: -1px;
  padding: 0 ${(p) => p.$pr}px 0 ${(p) => p.$pl}px;
  border: 2px solid #3d3d3d;
  border-radius: 6px;
  background: ${(p) => p.$bg};
`;
const VecBox = styled.div`
  display: flex;
  flex-direction: column;
  gap: 2px;
  width: 190px;
  height: 94px;
  margin-left: 17px;
  border: 2px solid #3d3d3d;
  border-radius: 7px;
  background: #3a3a3a;
  overflow: hidden;
`;
const VecRow = styled.div`
  flex: 1;
  display: flex;
  align-items: center;
  justify-content: space-between;
  padding: 0 21px 0 23px;
  background: ${C.btn};
`;
const Vec = ({ v }) => (
  <VecBox>{["X", "Y", "Z"].map((k) => <VecRow key={k}><Label>{k}</Label><Label>{v}</Label></VecRow>)}</VecBox>
);
const NodeCheck = styled.div`
  width: 23px;
  height: 23px;
  margin: 0 5px 0 -1px;
  border: 2px solid #3d3d3d;
  border-radius: 4px;
  background: ${C.btn};
`;
const Grip = styled.div`
  width: 9px;
  height: 13px;
  margin-right: -3px;
  border: solid rgba(255, 255, 255, 0.25);
  border-width: 0 2px;
`;
const ScrollV = styled.div`
  position: absolute;
  z-index: 2;
  right: 4px;
  top: ${(p) => p.$y}px;
  width: 6px;
  height: ${(p) => p.$h}px;
  border-radius: 3px;
  background: #2d2d2d;
`;
const ScrollH = styled.div`
  position: absolute;
  left: 16px;
  right: 17px;
  bottom: 4px;
  height: 6px;
  border-radius: 3px;
  background: #303030;
`;
const GREEN = "#39705d";
const PINK = "#cca6d6";
const INDIGO = "#6363c7";
const INT = "#648e5c";
const CubeSockets = styled.div`
  position: absolute;
  left: ${(p) => p.$x}px;
  top: ${(p) => p.$y}px;
`;
const NodeCanvas = () => (
  <Canvas>
    <NodeBox $x={613} $y={1224} $w={227} $h={117} $sel>
      <NodeHead $h={34} $bg="#1d1d1d" $sel><Chev big /><Label $ml={1}>Group Input</Label></NodeHead>
      <NodeRow $out $h={47}><Label>Geometry</Label><Socket c={C.teal} out /></NodeRow>
      <NodeRow $h={24}><Socket t="e" out /></NodeRow>
    </NodeBox>
    <NodeBox $x={968} $y={1143} $w={224} $h={265}>
      <NodeHead $h={31} $bg={GREEN}><Chev big /><Label>Mesh to Points</Label></NodeHead>
      <NodeRow $out $h={50}><Label>Points</Label><Socket c={C.teal} out /></NodeRow>
      <NodeRow $h={37}><NodeField $bg="#282828" $pl={10} $pr={2}><Label>Vertices</Label><Chev /></NodeField></NodeRow>
      <NodeRow $h={36}><Label>Mesh</Label><Socket c={C.teal} /></NodeRow>
      <NodeRow $h={35}><Label>Selection</Label><Socket c={PINK} t="dd" /></NodeRow>
      <NodeRow $h={36}><Label>Position</Label><Socket c={INDIGO} t="d" /></NodeRow>
      <NodeRow $h={34}><NodeField $bg={C.btn} $pl={23} $pr={19}><Label>Radius</Label><Label>0.05 m</Label></NodeField><Socket c="#a1a1a1" t="dd" /></NodeRow>
    </NodeBox>
    <NodeBox $x={1303} $y={1256} $w={219} $h={47} $r={16} $bg={GREEN}>
      <NodeRow $h={47}>
        <Chev big d="right" /><Label $ml={1}>Cube</Label><Push /><Grip />
      </NodeRow>
      <CubeSockets $x={4.5} $y={4.7}><Socket c={INDIGO} /></CubeSockets>
      <CubeSockets $x={-4} $y={16.7}><Socket c={INT} /></CubeSockets>
      <CubeSockets $x={-4} $y={31.3}><Socket c={INT} /></CubeSockets>
      <CubeSockets $x={4.5} $y={43.3}><Socket c={INT} /></CubeSockets>
      <CubeSockets $x={217} $y={12}><Socket c={C.teal} /></CubeSockets>
      <CubeSockets $x={217} $y={35.7}><Socket c={INDIGO} t="d" /></CubeSockets>
    </NodeBox>
    <NodeBox $x={1595} $y={1110} $w={224} $h={524}>
      <NodeHead $h={32} $bg={GREEN}><Chev big /><Label>Instance on Points</Label></NodeHead>
      <NodeRow $out $h={48}><Label>Instances</Label><Socket c={C.teal} out /></NodeRow>
      <NodeRow $h={33}><Label>Points</Label><Socket c={C.teal} /></NodeRow>
      <NodeRow $h={36}><Label>Selection</Label><Socket c={PINK} t="dd" /></NodeRow>
      <NodeRow $h={36}><Label>Instance</Label><Socket c={C.teal} /></NodeRow>
      <NodeRow $h={35}><NodeCheck /><Label>Pick Instance</Label><Socket c={PINK} t="dd" /></NodeRow>
      <NodeRow $h={35}><Label>Instance Index</Label><Socket c={INT} t="d" /></NodeRow>
      <NodeRow $h={35}><Label>Rotation:</Label><Socket c="#a663c7" t="dd" /></NodeRow>
      <Vec v="0°" />
      <NodeRow $h={38} $pt={3}><Label>Scale:</Label><Socket c={INDIGO} t="dd" dy={1.5} /></NodeRow>
      <Vec v="1.000" />
    </NodeBox>
    <NodeBox $x={1922} $y={1114} $w={224} $h={115}>
      <NodeHead $h={33} $bg="#1d1d1d"><Chev big /><Label>Group Output</Label></NodeHead>
      <NodeRow $h={45}><Label>Geometry</Label><Socket c={C.teal} /></NodeRow>
      <NodeRow $h={26}><Socket t="e" /></NodeRow>
    </NodeBox>
    <LinkSvg width="2493" height="754" viewBox="114 948 2493 754">
      {[[848, 1281.300, 959, 1279.200, "#b3e8d3"], [1201, 1198.900, 1586, 1205.900, C.teal], [1529, 1268.500, 1586, 1275.800, C.teal], [1828, 1166.300, 1913, 1169.400, C.teal]].map(([a, b, c, d, s], i) => (
        <g key={i}>
          <line x1={a} y1={b} x2={c} y2={d} stroke="#141414" strokeWidth="6.500" />
          <line x1={a} y1={b} x2={c} y2={d} stroke={s} strokeWidth="4.200" />
        </g>
      ))}
    </LinkSvg>
  </Canvas>
);
const Crumbs = styled.div`
  position: relative;
  z-index: 2;
  display: flex;
  align-items: center;
  height: 28px;
  margin: 26px 0 0 35px;
`;
const NodeEditor = () => (
  <Area $w={2493} $h={754} $bg="#1d1d1d">
    <NodeCanvas />
    <Header>
      <MenuButton icon="geo" />
      <Widget $w={155} $ml={10}><Seg $j="space-between" $pl={14} $pr={5}><Label>Modifier</Label><Chev /></Seg></Widget>
      <Label $ml={26} $w={81}>View</Label>
      <Label $w={97}>Select</Label>
      <Label $w={73}>Add</Label>
      <Label $w={461}>Node</Label>
      <Widget $w={437}>
        <Seg $w={59} $gap={7}><Icon n="group" /><Chev /></Seg>
        <Seg $sep $j="flex-start" $pl={15} $bg={C.field}><Label>YourGeoNodeGroup1</Label></Seg>
        <Seg $w={38} $bg={C.btn}><Icon n="shield" c="#a8a8a8" /></Seg>
        <Seg $w={41} $sep $bg={C.btn}><Icon n="dup" /></Seg>
        <Seg $w={39} $sep $bg={C.btn}><Icon n="x" /></Seg>
      </Widget>
      <Slot $ml={17} $h={39}><Icon n="pin" c="#a5a5a5" /></Slot>
      <Widget $w={38} $ml={771} $bg="#303030" $line="#2b2b2b"><Seg><Icon n="up" c="#6c6c6c" /></Seg></Widget>
      <Widget $w={104} $ml={11}><Seg $w={38} $bg={C.btn}><Icon n="magnet" c="#a5a5a5" /></Seg><Seg $gap={10}><Icon n="grid" c="#c8c8c8" /><Chev /></Seg></Widget>
      <Toggle icon="overlay" wd={79} ml={10} iw={38} />
    </Header>
    <Crumbs>
      <Icon n="object" /><Label $ml={19} $w={89}>Circle</Label>
      <Chev big d="right" />
      <Slot $ml={17}><Icon n="geo" /></Slot><Label $ml={18} $w={201}>GeometryNodes</Label>
      <Chev big d="right" />
      <Slot $ml={15}><Icon n="group" bg="#1d1d1d" /></Slot><Label $ml={19}>YourGeoNodeGroup1</Label>
    </Crumbs>
    <ScrollV $y={69} $h={663} />
    <ScrollH />
    <EdgeTab $y={79} $side="left" $bg="#191919"><Chev d="right" c="#999" /></EdgeTab>
    <EdgeTab $y={79} $bg="#1f1f1f"><Chev d="left" c="#999" /></EdgeTab>
  </Area>
);

/* ---------- timeline ---------- */
const Scrub = styled.div`
  flex: none;
  display: flex;
  align-items: center;
  height: 46px;
  padding-left: 67px;
  background: #1d1d1d;
  color: #989898;
`;
const Playhead = styled.div`
  position: relative;
  flex: none;
  width: 48px;
  height: 34px;
  margin-right: 13px;
  border-radius: 7px;
  border: 2px solid #5577b8;
  background: #4b6aa5;
  color: #fff;
  text-align: center;
  line-height: 30px;
  &::after {
    content: "";
    position: absolute;
    left: 20px;
    top: 32px;
    width: 4px;
    height: 36px;
    background: #4f70af;
  }
`;
const Frame = styled.div`
  flex: none;
  width: 92.800px;
  text-align: center;
`;
const Strip = styled.div`
  flex: none;
  display: flex;
  align-items: center;
  height: 27px;
  padding: 0 17px 0 16px;
  background-color: #2f2f2f;
  background-image: linear-gradient(90deg, #202020 91px, transparent 91px 2402px, #202020 2402px), linear-gradient(90deg, #131313 2px, transparent 2px),
    linear-gradient(90deg, #252525 2px, transparent 2px);
  background-size: 100% 100%, 92.800px 100%, 92.800px 100%;
  background-position: 0 0, 80.600px 0, 127px 0;
`;
const RangeBar = styled.div`
  position: relative;
  z-index: 2;
  flex: 1;
  display: flex;
  align-items: center;
  justify-content: space-between;
  height: 17px;
  padding: 0 1px;
  border-radius: 9px;
  border: 1.500px solid #4a4a4a;
  background: ${C.btn};
  &::before,
  &::after {
    content: "";
    width: 12px;
    height: 12px;
    border-radius: 50%;
    background: #2a2a2a;
  }
`;
const FRAMES = Array.from({ length: 25 }, (_, i) => (i + 1) * 10);
const Timeline = () => (
  <Area $w={2493} $h={123} $bg="#1d1d1d">
    <Header $h={50} $pt={6} $bg="#303030">
      <MenuButton icon="clock" />
      <Widget $w={263} $ml={10}>
        <Seg $w={140} $j="space-between" $pl={14} $pr={4}><Label>Playback</Label><Chev /></Seg>
        <Seg $sep $j="space-between" $pl={14} $pr={4}><Label>Keying</Label><Chev /></Seg>
      </Widget>
      <Label $ml={20} $w={81}>View</Label>
      <Label $w={607}>Marker</Label>
      <Widget $w={79} $bg="#2b2b2b" $line="#383838"><Seg $w={37} $bg="#4f4f4f"><Icon n="record" c="#a0a0a0" /></Seg><Seg><Chev c="#4c4c4c" /></Seg></Widget>
      <Widget $w={239} $ml={11} $bg={C.btn}>
        <Seg $w={36}><Icon n="first" /></Seg>
        <Seg $sep><Icon n="prevKey" /></Seg>
        <Seg $sep><Icon n="play" flip /></Seg>
        <Seg $sep><Icon n="play" /></Seg>
        <Seg $sep><Icon n="prevKey" flip /></Seg>
        <Seg $sep $w={38}><Icon n="first" flip /></Seg>
      </Widget>
      <Widget $w={149} $ml={540} $bg={C.btn}><Seg><Label>1</Label></Seg></Widget>
      <Widget $w={390} $ml={10} $bg={C.btn}>
        <Seg $w={37}><Icon n="watch" /></Seg>
        <Seg $sep $w={179} $j="space-between" $pl={31} $pr={26}><Label>Start</Label><Label>1</Label></Seg>
        <Seg $sep $j="space-between" $pl={31} $pr={24}><Label>End</Label><Label>250</Label></Seg>
      </Widget>
    </Header>
    <Scrub>
      <Playhead>1</Playhead>
      {FRAMES.map((f) => <Frame key={f}>{f}</Frame>)}
    </Scrub>
    <Strip><RangeBar /></Strip>
    <ScrollV $y={68} $h={50} />
    <EdgeTab $y={79} $side="left" $bg="#191919"><Chev d="right" c="#888" /></EdgeTab>
    <EdgeTab $y={79} $bg="rgba(25,25,25,0.600)"><Chev d="left" c="#888" /></EdgeTab>
  </Area>
);

/* ---------- outliner ---------- */
const OutBody = styled.div`
  flex: 1;
  position: relative;
  background: repeating-linear-gradient(#282828 0 40px, #2b2b2b 40px 80px);
`;
const OutRow = styled.div`
  display: flex;
  align-items: center;
  height: 40px;
  padding-left: ${(p) => p.$pl}px;
  background: ${(p) => (p.$on ? "#3a4b7c" : "transparent")};
  ${Label} { margin-top: 4px; }
`;
const Badge = styled.div`
  flex: none;
  display: grid;
  place-items: center;
  width: 40px;
  height: 36px;
  margin-left: ${(p) => p.$ml || 0}px;
  border-radius: 8px;
  border: 2px solid ${(p) => p.$line || "transparent"};
  background: ${(p) => p.$bg || "transparent"};
`;
const CheckBox = styled.div`
  width: 20px;
  height: 20px;
  display: grid;
  place-items: center;
  border-radius: 2px;
  background: #e4e4e4;
`;
const RowEnd = styled.div`
  display: flex;
  align-items: center;
  gap: 13px;
  margin-left: auto;
  padding: 0 26px 1px 0;
`;
const Vis = ({ check, bg }) => (
  <RowEnd>
    {check && <CheckBox><svg width="16" height="16" viewBox="0 0 16 16"><path d="M2 8l4 4 8-9" fill="none" stroke="#222" strokeWidth="3" /></svg></CheckBox>}
    <Slot $ml={2}><Icon n="eye" s={27} bg={bg || C.dark} /></Slot>
    <Icon n="camera" s={27} bg={bg || C.dark} />
  </RowEnd>
);
const OutGuide = styled.div`
  position: absolute;
  left: 57px;
  top: 90px;
  width: 1.500px;
  height: 100px;
  background: #6a6a6a;
`;
const SearchBox = ({ wd, ml }) => (
  <Widget $w={wd} $ml={ml} $bg={C.field}>
    <Seg $j="flex-start" $pl={7}><Icon n="search" /><Label $ml={15} $c="#606060">Search</Label></Seg>
  </Widget>
);
const Outliner = () => (
  <Area $w={520} $h={464} $bg="#282828">
    <Header $h={51}>
      <MenuButton icon="outliner" />
      <MenuButton icon="layers" ml={10} />
      <SearchBox wd={231} ml={32} />
      <Widget $w={64} $ml={32}><Seg $gap={9}><Icon n="filter" /><Chev /></Seg></Widget>
    </Header>
    <OutBody>
      <OutRow $pl={45}><Icon n="box" c="#cfcfcf" /><Label $ml={15} $c="#c2c2c2">Scene Collection</Label></OutRow>
      <OutRow $pl={49}><Chev big c="#c2c2c2" /><Badge $ml={12} $bg="#4a4a4a" $line="#686868"><Icon n="box" bg="#4a4a4a" c="#dcdcdc" /></Badge><Label $ml={9} $c="#c2c2c2">Collection</Label><Vis check /></OutRow>
      <OutRow $pl={91}><Chev big d="right" c="#c2c2c2" /><Badge $ml={10}><Icon n="cine" c="#b98252" s={29} /></Badge><Label $ml={9} $w={119} $c="#c2c2c2">Camera</Label><Badge $bg="#474747" $line="#606060"><Icon n="cineOut" c="#4fb797" /></Badge><Vis /></OutRow>
      <OutRow $pl={91} $on><Chev big d="right" c="#c2c2c2" /><Badge $ml={10} $bg="#5d6c92" $line="#737f9f"><Icon n="tri" c="#c18c62" /></Badge><Label $ml={9} $w={105} $c="#efa643">Circle</Label><Icon n="wrench" g="#6b8adf" /><Slot $ml={12}><Icon n="mesh" c="#4fb797" /></Slot><Vis bg="#3a4b7c" /></OutRow>
      <OutRow $pl={91}><Chev big d="right" c="#c2c2c2" /><Badge $ml={10}><Icon n="bulb" c="#b98252" s={30} /></Badge><Label $ml={9} $w={94} $c="#c2c2c2">Light</Label><Icon n="lightData" c="#4aa98c" s={30} /><Vis /></OutRow>
      <OutGuide />
    </OutBody>
  </Area>
);

/* ---------- properties ---------- */
const PropTabs = styled.div`
  flex: none;
  display: flex;
  flex-direction: column;
  width: 57px;
  background: #1d1d1d;
`;
const PropTab = styled.div`
  flex: none;
  display: grid;
  place-items: center;
  height: ${(p) => (p.$on ? 52 : 56)}px;
  margin: ${(p) => (p.$mt || 0) + (p.$on ? 2 : 0)}px 0 ${(p) => (p.$on ? 2 : 0)}px 5px;
  border-radius: 7px 0 0 7px;
  background: ${(p) => (p.$on ? "#303030" : "transparent")};
`;
const PropBody = styled.div`
  flex: 1;
  display: flex;
  flex-direction: column;
  padding: 22px 15px 0 16px;
  background: #303030;
`;
const PTABS = [
  ["tool", "#a8a8a8", 16], ["render", "#a8a8a8", 15], ["output", "#a8a8a8"], ["layers", "#a8a8a8"], ["scene", "#a8a8a8"], ["world", "#a25a5f"],
  ["boxOut", "#e0e0e0", 17], ["object", "#b98252", 16], ["wrench", "#7b9ff5"], ["particles", "#6a88cf"], ["physics", "#6a88cf"],
  ["constraint", "#6a88cf"], ["mesh", "#4fb797"], ["material", "#a25a5f"], ["texture", "#a25a5f", 16],
];
const PathRow = styled.div`
  display: flex;
  align-items: center;
  height: 28px;
  padding-left: 6px;
`;
const AddBtn = styled.div`
  display: grid;
  grid-template-columns: 36px 1fr;
  align-items: center;
  height: 38px;
  margin-top: 39px;
  padding-left: 8px;
  border: 2px solid ${C.line};
  border-radius: 8px;
  background: ${C.btn};
`;
const ModPanel = styled.div`
  height: 395px;
  margin-top: 22px;
  border: 2px solid ${C.blue};
  border-radius: 9px;
  overflow: hidden;
  background: #3d3d3d;
`;
const ModRow = styled.div`
  display: flex;
  align-items: center;
  height: ${(p) => p.$h}px;
  padding: ${(p) => p.$pt || 0}px 0 ${(p) => p.$pb || 0}px ${(p) => p.$pl}px;
  background: ${(p) => p.$bg || "transparent"};
`;
const ModButtons = styled.div`
  display: grid;
  grid-template-columns: 36px 38px 38px 38px 38px;
  gap: 2px;
  height: 36px;
  margin-left: ${(p) => p.$ml}px;
  border-radius: 7px;
  overflow: hidden;
  background: #323232;
`;
const IdRow = styled(ModButtons)`
  grid-template-columns: 60px 214px 38px 38px 38px;
`;
const Dots = styled.div`
  width: 22px;
  height: 10px;
  margin-left: 32px;
  background: radial-gradient(circle, #9a9a9a 1.100px, transparent 1.300px) 0 0 / 5px 5px;
`;
const Properties = () => (
  <Area $w={520} $h={1173} $bg="#303030">
    <Header $h={50} $pt={5} $pl={16} $bg="#343434">
      <MenuButton icon="props" w={63} />
      <SearchBox wd={229} ml={58} />
      <Widget $w={39} $ml={101}><Seg><Chev /></Seg></Widget>
    </Header>
    <Row>
      <PropTabs>
        {PTABS.map(([n, c, mt]) => (
          <PropTab key={n} $mt={mt} $on={n === "wrench"}><Icon n={n} c={c} bg="#1d1d1d" g={n === "object" ? "#7d5c40" : undefined} /></PropTab>
        ))}
      </PropTabs>
      <PropBody>
        <PathRow>
          <Icon n="object" /><Label $ml={18} $w={73}>Circle</Label><Chev big d="right" />
          <Slot $ml={16}><Icon n="geo" /></Slot><Label $ml={18} $w={193}>GeometryNo...</Label><Icon n="pin" c="#a5a5a5" />
        </PathRow>
        <AddBtn><Icon n="plus" /><Label $a="center">Add Modifier</Label></AddBtn>
        <ModPanel>
          <ModRow $h={47} $pb={1} $pl={14}>
            <Chev big c="#c4c4c4" />
            <Slot $ml={12}><Icon n="geo" /></Slot>
            <ModButtons $ml={60}>
              <Seg $bg={C.btn}><Icon n="mesh" /></Seg>
              <Seg $bg={C.blue}><Icon n="editmode" /></Seg>
              <Seg $bg={C.blue}><Icon n="screen" c="#fff" s={27} /></Seg>
              <Seg $bg={C.blue}><Icon n="camera" c="#fff" s={27} bg={C.blue} /></Seg>
              <Seg $bg="#282828"><Chev big /></Seg>
            </ModButtons>
            <Slot $ml={8}><Icon n="x" /></Slot>
            <Dots />
          </ModRow>
          <ModRow $h={68} $pt={3} $pl={16}>
            <IdRow $ml={0}>
              <Seg $bg="#282828" $gap={6}><Icon n="group" /><Chev /></Seg>
              <Seg $bg={C.field} $j="flex-start" $pl={15}><Label>YourGeoNodeGr...</Label></Seg>
              <Seg $bg={C.btn}><Icon n="shield" c="#a8a8a8" /></Seg>
              <Seg $bg={C.btn}><Icon n="dup" /></Seg>
              <Seg $bg={C.btn}><Icon n="x" /></Seg>
            </IdRow>
          </ModRow>
          <ModRow $h={47} $pb={11} $pl={24}><Chev big /><Label $ml={14}>Manage</Label></ModRow>
          <ModRow $h={58} $pl={24} $bg="#353535"><Chev big /><Label $ml={14}>Bake</Label></ModRow>
          <ModRow $h={60} $pl={61} $bg="#2d2d2d">
            <Label $w={122}>Bake Path</Label>
            <Widget $w={230} $h={38} $bg={C.field}><Seg /><Seg $sep $w={40} $bg={C.btn}><Icon n="folder" /></Seg></Widget>
          </ModRow>
          <ModRow $h={48} $pb={9} $pl={24} $bg="#353535"><Chev big /><Label $ml={14}>Named Attributes</Label></ModRow>
          <ModRow $h={63} $pb={6} $pl={20} $bg="#2d2d2d"><Icon n="info" bg="#2d2d2d" /><Label $ml={18}>No named attributes used</Label></ModRow>
        </ModPanel>
      </PropBody>
    </Row>
  </Area>
);

/* ---------- status bar ---------- */
const Status = styled.div`
  flex: none;
  display: flex;
  align-items: center;
  height: 42px;
  padding: 2px 23px 0;
  background: #181818;
`;
const Mouse = ({ b }) => (
  <svg width="24" height="31" viewBox="0 0 24 31">
    <rect x="1.200" y="1.200" width="21.600" height="28.600" rx="5.500" fill="none" stroke="#8a8a8a" strokeWidth="2" />
    {b === "l" && <path d="M5 0h6v14H0V6z" fill="#9a9a9a" />}
    {b === "m" && <rect x="8.500" y="4.500" width="7" height="12" rx="3" fill="#9a9a9a" />}
    {b === "r" && <path d="M19 0h-6v14h11V6z" fill="#9a9a9a" />}
  </svg>
);

const Main = styled.main`
  flex: none;
  display: flex;
  gap: 7px;
  height: 1645px;
  padding: 0 2px;
`;
const Column = styled.div`
  flex: none;
  display: flex;
  flex-direction: column;
  gap: ${(p) => p.$gap}px;
`;
const Pair = styled.div`
  display: flex;
  gap: 7px;
`;

export default function App() {
  return (
    <Page>
      <Global />
      <Window>
        <TitleBar>
          <Lights>
            <Light $c="#ed6a5e" $b="#d5584d" $dot="#66100b" />
            <Light $c="#f5bf4f" $b="#dba63d" />
            <Light $c="#62c554" $b="#50ab43" />
          </Lights>
          <WinTitle>
            <svg width="24" height="30" viewBox="0 0 24 30">
              <path d="M0 0h17l7 8v22H0z" fill="#fafafa" stroke="#dcdcdc" strokeWidth="1" />
              <path d="M17 0v8h7z" fill="#e6e6e6" />
              <g stroke="#eeb382" strokeWidth="2" fill="none"><circle cx="13.500" cy="16" r="4.500" /><path d="M3 19l9-8M6 13h7M10 8l5 4" /></g>
              <circle cx="13.500" cy="16" r="2" fill="#5d83ad" />
            </svg>
            <span>* intro_geonodes - Blender 4.1 Beta</span>
          </WinTitle>
          <span />
        </TitleBar>
        <TopBar />
        <Main>
          <Column $gap={7}>
            <Pair><Spreadsheet /><Viewport /></Pair>
            <NodeEditor />
            <Timeline />
          </Column>
          <Column $gap={8}>
            <Outliner />
            <Properties />
          </Column>
        </Main>
        <Status>
          <Mouse b="l" />
          <Slot $ml={398}><Mouse b="m" /></Slot>
          <Slot $ml={398}><Mouse b="r" /></Slot>
          <Push />
          <Label $c="#8c8c8c">4.1.0 Beta</Label>
        </Status>
      </Window>
    </Page>
  );
}
